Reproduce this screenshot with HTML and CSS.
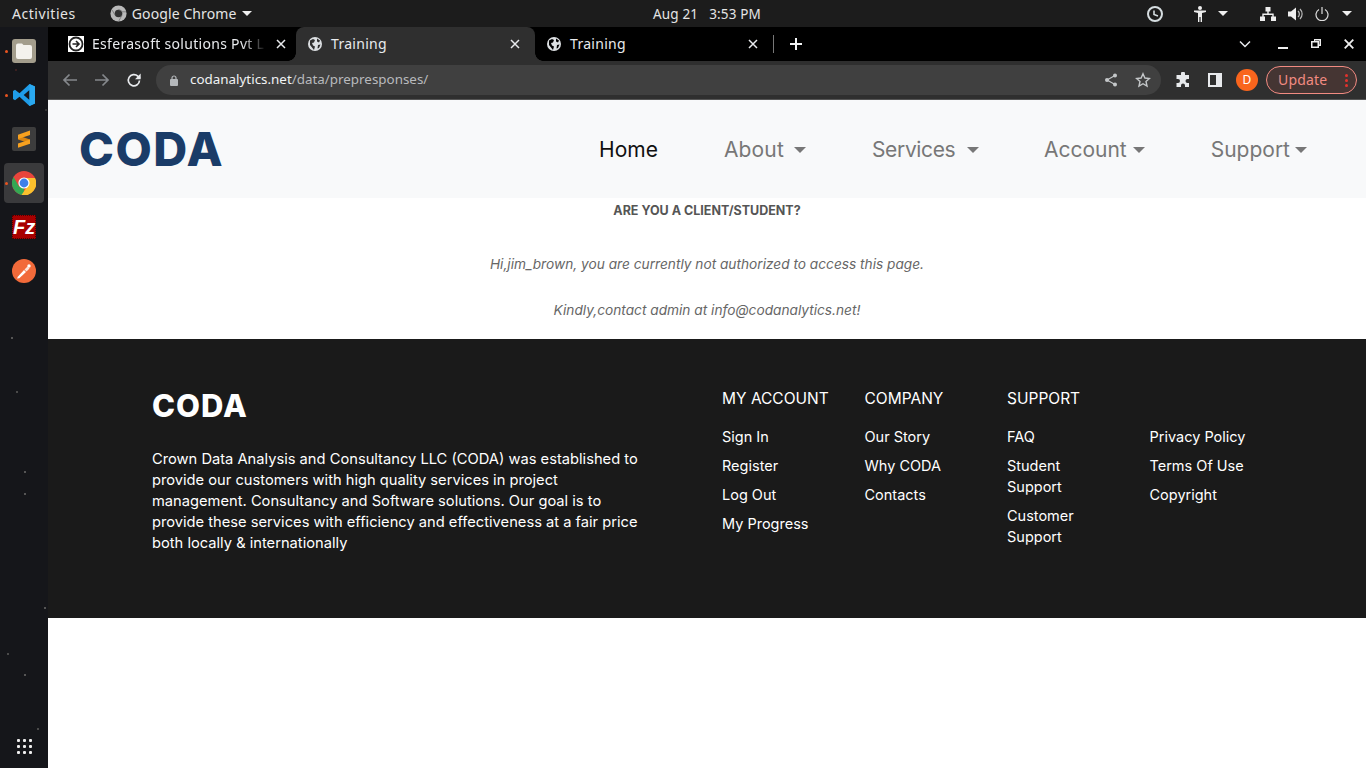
FILE: index.html
```html
<!DOCTYPE html>
<html lang="en">
<head>
    <meta charset="UTF-8">
    <title>Training</title>
    <link rel="stylesheet" href="styles.css">
</head>
<body>
    <div class="topbar">
        <div class="top-left">
            <span class="activities">Activities</span>
            <span class="app-menu">
                <svg class="app-icon" width="17" height="17" viewBox="0 0 20 20"><circle cx="10" cy="10" r="9.500" fill="#b9b9b9"/><circle cx="10" cy="10" r="4.500" fill="#333"/><path d="M10 5.500a4.500 4.500 0 0 1 4 2.500h5M6 12l-3.500-6M14 12.200L10 19.500" stroke="#777" stroke-width="1" fill="none"/></svg>
                Google Chrome
                <i class="caret"></i>
            </span>
        </div>
        <div class="clock"><span>Aug 21</span><span>3:53 PM</span></div>
        <div class="top-right">
            <svg class="tray-clock" width="18" height="18" viewBox="0 0 18 18"><circle cx="9" cy="9" r="7" fill="none" stroke="#d5dde0" stroke-width="2"/><path d="M8 5.500V9.500L12 11" fill="none" stroke="#d5dde0" stroke-width="1.600"/></svg>
            <svg class="tray-person" width="14" height="16" viewBox="0 0 14 16"><circle cx="7" cy="2" r="2" fill="#eee"/><path d="M1 4.500h12v1.600l-4 .9V16H7.600v-5H6.400v5H5V7L1 6.100z" fill="#eee"/></svg>
            <i class="caret tray-caret"></i>
            <svg class="tray-net" width="16" height="14" viewBox="0 0 16 14"><path d="M5.500 0h5v4.500h-5zM0 9.500h5V14H0zM11 9.500h5V14h-5zM7.300 4.500h1.400v2h5v3h-1.400V8H3.700v1.500H2.300v-3h5z" fill="#eee"/></svg>
            <svg class="tray-sound" width="16" height="14" viewBox="0 0 16 14"><path d="M0 4.500h3L8 .5v13l-5-4H0z" fill="#eee"/><path d="M10 4a4 4 0 0 1 0 6M12 2a7 7 0 0 1 0 10" fill="none" stroke="#bbb" stroke-width="1.200"/></svg>
            <svg class="tray-power" width="14" height="14" viewBox="0 0 14 14"><path d="M4 2.500a6 6 0 1 0 6 0" fill="none" stroke="#ddd" stroke-width="1.200"/><path d="M7 0v7" stroke="#ddd" stroke-width="1.200"/></svg>
            <i class="caret tray-caret-last"></i>
        </div>
    </div>

    <div class="desktop">
        <aside class="dock">
            <div class="dock-item">
                <i class="dot"></i>
                <svg width="24" height="24" viewBox="0 0 24 24"><rect width="24" height="24" rx="3" fill="#a39d8c"/><path d="M4 6.500a2 2 0 0 1 2-2h4l1.500 1.500H18a2 2 0 0 1 2 2V18a2 2 0 0 1-2 2H6a2 2 0 0 1-2-2z" fill="#f4f2ed"/></svg>
            </div>
            <div class="dock-item">
                <i class="dot"></i>
                <svg width="24" height="24" viewBox="0 0 24 24"><path d="M17.500 1L23 3.500v17L17.500 23 7.500 13.800 3 17.200 1 16V8l2-1.200 4.500 3.400zM17.500 7l-5.800 5 5.800 5z" fill="#1f9ce8" fill-rule="evenodd"/><path d="M17.500 1L23 3.500v17L17.500 23z" fill="#2aa9f0"/></svg>
            </div>
            <div class="dock-item">
                <svg width="24" height="24" viewBox="0 0 24 24"><rect width="24" height="24" rx="2" fill="#3d3d3d"/><path d="M6 8.500l12 4v4l-12-4z" fill="#d98511"/><path d="M18 3.500V8L6 12V7.800zM18 12.500v4.200L6 20.700v-4.200z" fill="#f7a11f"/></svg>
            </div>
            <div class="dock-item dock-active">
                <i class="dot"></i>
                <svg width="24" height="24" viewBox="0 0 24 24"><circle cx="12" cy="12" r="12" fill="#e8453c"/><path d="M12 24a12 12 0 0 1-10.400-18L7 15.500l5 1.500z" fill="#34a853"/><path d="M23 7H12l-1 5 3.500 4.500L9.500 24A12 12 0 0 0 23 7z" fill="#fbc02d"/><circle cx="12" cy="12" r="5.600" fill="#fff"/><circle cx="12" cy="12" r="4.400" fill="#3f7fe8"/></svg>
            </div>
            <div class="dock-item">
                <div class="fz-logo">Fz</div>
            </div>
            <div class="dock-item">
                <svg width="24" height="24" viewBox="0 0 24 24"><circle cx="12" cy="12" r="12" fill="#f26a3a"/><path d="M5 19.500l.8-1.800 6.200-6.700 2 2-6.700 6.200z" fill="#fff"/><path d="M12.500 10.500l3-3 2 2-3 3z" fill="#ffe3d8"/><circle cx="17" cy="7" r="1.700" fill="#fff"/></svg>
            </div>
            <div class="dock-apps">
                <i></i><i></i><i></i><i></i><i></i><i></i><i></i><i></i><i></i>
            </div>
        </aside>

        <div class="browser">
            <div class="tabstrip">
                <div class="tab">
                    <svg class="favicon" width="16" height="16" viewBox="0 0 16 16"><rect width="16" height="16" fill="#fff"/><circle cx="8" cy="8" r="6.500" fill="none" stroke="#222" stroke-width="1.800"/><path d="M4.500 8h6M8 5l3 3-3 3" fill="none" stroke="#222" stroke-width="1.600"/></svg>
                    <span class="tab-title tab-fade">Esferasoft solutions Pvt L</span>
                    <svg class="tab-x" width="10" height="10" viewBox="0 0 10 10"><path d="M1 1l8 8M9 1l-8 8" stroke="#e8eaed" stroke-width="1.500"/></svg>
                </div>
                <div class="tab tab-active">
                    <svg class="favicon" width="14" height="14" viewBox="0 0 14 14"><circle cx="7" cy="7" r="7" fill="#dcdfe2"/><path d="M2 3.500l3-1.500 2 1-1 2.500-2 .5 1 2.500 2 1-1 3.500L2 8zM9 1.500l3 2-1 2-2-1zM10 8l2.500-.5L11 11l-1.500.5z" fill="#2f2f2f"/></svg>
                    <span class="tab-title">Training</span>
                    <svg class="tab-x" width="10" height="10" viewBox="0 0 10 10"><path d="M1 1l8 8M9 1l-8 8" stroke="#e8eaed" stroke-width="1.500"/></svg>
                </div>
                <div class="tab tab-last">
                    <svg class="favicon" width="14" height="14" viewBox="0 0 14 14"><circle cx="7" cy="7" r="7" fill="#dcdfe2"/><path d="M2 3.500l3-1.500 2 1-1 2.500-2 .5 1 2.500 2 1-1 3.500L2 8zM9 1.500l3 2-1 2-2-1zM10 8l2.500-.5L11 11l-1.500.5z" fill="#000"/></svg>
                    <span class="tab-title">Training</span>
                    <svg class="tab-x" width="10" height="10" viewBox="0 0 10 10"><path d="M1 1l8 8M9 1l-8 8" stroke="#e8eaed" stroke-width="1.500"/></svg>
                </div>
                <svg class="new-tab" width="14" height="14" viewBox="0 0 14 14"><path d="M7 1v12M1 7h12" stroke="#f1f3f4" stroke-width="2"/></svg>
                <div class="window-btns">
                    <svg width="12" height="8" viewBox="0 0 12 8"><path d="M1 1.500l5 5 5-5" fill="none" stroke="#e8eaed" stroke-width="1.500"/></svg>
                    <svg class="win-min" width="10" height="10" viewBox="0 0 10 10"><path d="M0 9h10" stroke="#eee" stroke-width="2"/></svg>
                    <svg class="win-max" width="10" height="10" viewBox="0 0 10 10"><path d="M3 0h7v7H8v2H0V2h3zM4 1.500V2h4v3.500h.500v-4zM1.500 3.500v4h5v-4z" fill="#eee" fill-rule="evenodd"/></svg>
                    <svg class="win-close" width="10" height="10" viewBox="0 0 10 10"><path d="M.7.700l8.600 8.600M9.300.7L.7 9.300" stroke="#eee" stroke-width="1.800"/></svg>
                </div>
            </div>

            <div class="toolbar">
                <svg class="nav-back" width="16" height="14" viewBox="0 0 16 14"><path d="M15 7H2M7.500 1.500L2 7l5.500 5.500" fill="none" stroke="#85888c" stroke-width="1.700"/></svg>
                <svg class="nav-forward" width="16" height="14" viewBox="0 0 16 14"><path d="M1 7h13M8.500 1.500L14 7l-5.500 5.500" fill="none" stroke="#85888c" stroke-width="1.700"/></svg>
                <svg class="nav-reload" width="16" height="16" viewBox="0 0 16 16"><path d="M13.500 8.500a5.600 5.600 0 1 1-1.700-4.300L14 6" fill="none" stroke="#e8eaed" stroke-width="1.700"/><path d="M14.700 1.500v5.700H9z" fill="#e8eaed"/></svg>
                <div class="omnibox">
                    <svg class="lock" width="8" height="11" viewBox="0 0 8 11"><path d="M2 4.500V3a2 2 0 0 1 4 0v1.500" fill="none" stroke="#b5b8bb" stroke-width="1.200"/><rect y="4" width="8" height="7" rx="1" fill="#b5b8bb"/></svg>
                    <span class="url"><b>codanalytics.net</b>/data/prepresponses/</span>
                    <svg class="omni-share" width="14" height="14" viewBox="0 0 14 14"><circle cx="11" cy="2.500" r="2" fill="#c4c7c9"/><circle cx="11" cy="11.500" r="2" fill="#c4c7c9"/><circle cx="3" cy="7" r="2" fill="#c4c7c9"/><path d="M11 2.500L3 7l8 4.500" fill="none" stroke="#c4c7c9" stroke-width="1.200"/></svg>
                    <svg class="omni-star" width="16" height="16" viewBox="0 0 16 16"><path d="M8 1.800l1.900 4.200 4.500.5-3.400 3 1 4.500L8 11.700l-4 2.300 1-4.500-3.400-3 4.500-.5z" fill="none" stroke="#c4c7c9" stroke-width="1.400"/></svg>
                </div>
                <svg class="tool-ext" width="16" height="16" viewBox="0 0 16 16"><path d="M6 1.500a2 2 0 0 1 4 0V3h4v4h-1.500a2 2 0 0 0 0 4H14v4H10v-1.500a2 2 0 0 0-4 0V15H1.500v-4H3a2 2 0 0 0 0-4H1.500V3H6z" fill="#e8eaed"/></svg>
                <svg class="tool-side" width="14" height="14" viewBox="0 0 14 14"><path d="M0 0h14v14H0zM2 2v10h6V2z" fill="#e8eaed" fill-rule="evenodd"/></svg>
                <div class="avatar">D</div>
                <div class="update-btn"><span>Update</span><i class="kebab"><b></b><b></b><b></b></i></div>
            </div>

            <main class="page">
                <nav class="navbar">
                    <a class="brand">CODA</a>
                    <ul class="nav-links">
                        <li class="nav-home">Home</li>
                        <li class="nav-about">About <i class="nav-caret"></i></li>
                        <li class="nav-services">Services <i class="nav-caret"></i></li>
                        <li class="nav-account">Account<i class="nav-caret"></i></li>
                        <li class="nav-support">Support<i class="nav-caret"></i></li>
                    </ul>
                </nav>

                <section class="notice">
                    <h6>ARE YOU A CLIENT/STUDENT?</h6>
                    <p>Hi,jim_brown, you are currently not authorized to access this page.</p>
                    <p>Kindly,contact admin at info@codanalytics.net!</p>
                </section>

                <footer class="footer">
                    <div class="footer-about">
                        <h2>CODA</h2>
                        <p>Crown Data Analysis and Consultancy LLC (CODA) was established to provide our customers with high quality services in project management. Consultancy and Software solutions. Our goal is to provide these services with efficiency and effectiveness at a fair price both locally &amp; internationally</p>
                    </div>
                    <div class="footer-cols">
                        <div class="footer-col">
                            <h4>MY ACCOUNT</h4>
                            <a>Sign In</a>
                            <a>Register</a>
                            <a>Log Out</a>
                            <a>My Progress</a>
                        </div>
                        <div class="footer-col">
                            <h4>COMPANY</h4>
                            <a>Our Story</a>
                            <a>Why CODA</a>
                            <a>Contacts</a>
                        </div>
                        <div class="footer-col">
                            <h4>SUPPORT</h4>
                            <a>FAQ</a>
                            <a>Student Support</a>
                            <a>Customer Support</a>
                        </div>
                        <div class="footer-col footer-legal">
                            <a>Privacy Policy</a>
                            <a>Terms Of Use</a>
                            <a>Copyright</a>
                        </div>
                    </div>
                </footer>
            </main>
        </div>
    </div>
</body>
</html>
```

FILE: styles.css
```css
* {
    box-sizing: border-box;
}
html, body {
    margin: 0;
    height: 100%;
    overflow: hidden;
}
body {
    font-family: "Noto Sans", sans-serif;
    background: #fff;
    width: 1366px;
    height: 768px;
}

/* gnome top bar */
.topbar {
    height: 27px;
    background: #1c1c1c;
    color: #e4e4e4;
    font-size: 14px;
    display: grid;
    grid-template-columns: 641px auto 1fr;
    align-items: center;
    padding: 0 0 0 12px;
}
.top-left {
    display: flex;
    align-items: center;
    gap: 34px;
}
.activities {
    letter-spacing: .55px;
}
.app-menu {
    display: flex;
    align-items: center;
    gap: 5px;
    letter-spacing: .1px;
}
.clock {
    display: flex;
    gap: 11px;
    font-size: 13.5px;
    letter-spacing: .15px;
}
.top-right {
    display: flex;
    align-items: center;
    justify-content: flex-end;
}
.caret {
    display: inline-block;
    border-left: 5px solid transparent;
    border-right: 5px solid transparent;
    border-top: 5px solid #eee;
    margin-left: 1px;
}
.tray-clock { margin-right: 29px; }
.tray-person { margin-right: 10px; }
.tray-caret { margin-right: 32px; }
.tray-net { margin-right: 12px; }
.tray-sound { margin-right: 11px; }
.tray-power { margin-right: 12px; }
.tray-caret-last { margin-right: 14px; }

.desktop {
    display: flex;
    height: 741px;
}

/* dock, with the specks of the wallpaper */
.dock {
    width: 48px;
    background-color: #15161a;
    background-image:
        radial-gradient(circle at 12px 311px, #555 1px, transparent 1.5px),
        radial-gradient(circle at 17px 365px, #4a4a4a 1px, transparent 1.5px),
        radial-gradient(circle at 25px 445px, #555 1px, transparent 1.5px),
        radial-gradient(circle at 25px 467px, #555 1px, transparent 1.5px),
        radial-gradient(circle at 45px 581px, #555 1px, transparent 1.5px),
        radial-gradient(circle at 8px 627px, #4a4a4a 1px, transparent 1.5px),
        radial-gradient(circle at 25px 648px, #555 1px, transparent 1.5px),
        radial-gradient(circle at 38px 702px, #4a4a4a 1px, transparent 1.5px),
        radial-gradient(circle at 46px 83px, #333 1px, transparent 1.5px),
        radial-gradient(circle at 16px 43px, #3a2020 1px, transparent 1.5px);
    display: flex;
    flex-direction: column;
    align-items: center;
    padding-top: 4px;
    position: relative;
}
.dock-item {
    width: 40px;
    height: 40px;
    margin-bottom: 4px;
    display: flex;
    align-items: center;
    justify-content: center;
    position: relative;
    border-radius: 4px;
}
.dock-active {
    background: #3a3a3c;
}
.dot {
    position: absolute;
    left: 1px;
    top: 19px;
    width: 3px;
    height: 3px;
    border-radius: 50%;
    background: #e95420;
}
.fz-logo {
    width: 24px;
    height: 24px;
    background: #a80000;
    border: 1px dotted #4d0000;
    color: #fff;
    font: italic bold 20px/22px "Liberation Sans", sans-serif;
    text-align: center;
}
.dock-apps {
    position: absolute;
    left: 17px;
    bottom: 14px;
    display: grid;
    grid-template-columns: repeat(3, 3px);
    gap: 3px;
}
.dock-apps i {
    width: 3px;
    height: 3px;
    background: #eee;
    border-radius: 1px;
}

.browser {
    flex: 1;
    display: flex;
    flex-direction: column;
    min-width: 0;
}

/* chrome tabs */
.tabstrip {
    height: 34px;
    background: #000;
    display: flex;
    align-items: center;
    color: #e8eaed;
    font-size: 14px;
}
.tab {
    width: 248px;
    height: 34px;
    display: flex;
    align-items: center;
    padding: 0 10px 0 20px;
    position: relative;
}
.tab-active {
    width: 239px;
    background: #2f2f2f;
    border-radius: 8px 8px 0 0;
    padding: 0 15px 0 12px;
}
/* the scooped corners where the black tabs meet the active one */
.tab-active::before,
.tab-active::after {
    content: "";
    position: absolute;
    bottom: 0;
    width: 8px;
    height: 8px;
}
.tab-active::before {
    left: -8px;
    background: radial-gradient(circle at 0 0, #000 7.500px, #2f2f2f 8px);
}
.tab-active::after {
    right: -8px;
    background: radial-gradient(circle at 100% 0, #000 7.500px, #2f2f2f 8px);
}
.tab-last {
    width: 239px;
    padding: 0 16px 0 12px;
}
.tab-last::after {
    content: "";
    position: absolute;
    right: 0;
    top: 8px;
    height: 18px;
    border-right: 1px solid #777;
}
.favicon {
    flex-shrink: 0;
    margin-right: 9px;
}
.tab:first-child .favicon {
    margin-right: 8px;
}
.tab-title {
    flex: 1;
    white-space: nowrap;
    letter-spacing: .3px;
    padding-bottom: 2px;
}
.tab-fade {
    -webkit-mask-image: linear-gradient(to right, #000 150px, transparent 174px);
    mask-image: linear-gradient(to right, #000 150px, transparent 174px);
}
.tab-x {
    flex-shrink: 0;
    margin-left: 6px;
}
.new-tab {
    margin-left: 15px;
}
.window-btns {
    margin-left: auto;
    display: flex;
    align-items: center;
    padding-right: 12px;
}
.win-min { margin-left: 27px; }
.win-max { margin-left: 23px; }
.win-close { margin-left: 23px; }

.toolbar {
    height: 39px;
    background: #2f2f2f;
    border-bottom: 1px solid #555;
    display: flex;
    align-items: center;
    padding: 0 9px 0 14px;
}
.nav-forward { margin-left: 16px; }
.nav-reload { margin-left: 16px; }
.omnibox {
    width: 1005px;
    height: 30px;
    margin-left: 14px;
    background: #404040;
    border-radius: 15px;
    display: flex;
    align-items: center;
    padding: 0 10px 0 14px;
    font-size: 13.4px;
    color: #b8babd;
}
.url {
    margin-left: 12px;
    flex: 1;
    padding-bottom: 2px;
}
.url b {
    font-weight: 400;
    color: #f1f3f4;
}
.omni-star { margin-left: 17px; }
.tool-ext { margin-left: 14px; }
.tool-side { margin-left: 17px; }
.avatar {
    width: 22px;
    height: 22px;
    margin-left: 14px;
    border-radius: 50%;
    background: #f9651d;
    color: #fff;
    font-size: 12px;
    line-height: 22px;
    text-align: center;
}
.update-btn {
    width: 91px;
    height: 28px;
    margin-left: 8px;
    border: 1px solid #f28b82;
    border-radius: 14px;
    background: #453533;
    color: #f28b82;
    font-size: 14px;
    letter-spacing: .2px;
    display: flex;
    align-items: center;
    padding: 0 8px 2px 11px;
    justify-content: space-between;
}
.kebab {
    display: flex;
    flex-direction: column;
    gap: 2px;
    margin-top: 2px;
}
.kebab b {
    width: 3px;
    height: 3px;
    border-radius: 50%;
    background: #e5322d;
}

/* the site */
.page {
    flex: 1;
    background: #fff;
    font-family: Inter, "Noto Sans", sans-serif;
}
.navbar {
    height: 98px;
    background: #f8f9fa;
    display: flex;
    align-items: center;
    justify-content: space-between;
    padding: 0 59px 0 31px;
}
.brand {
    font-size: 47px;
    font-weight: 800;
    color: #1a3c68;
    letter-spacing: 1.500px;
    margin-top: -2px;
}
.nav-links {
    list-style: none;
    display: flex;
    margin: 0;
    padding: 0;
    font-size: 21px;
    color: #777;
}
.nav-home { color: #111; margin-right: 66px; }
.nav-about { margin-right: 66px; letter-spacing: .15px; }
.nav-about .nav-caret { margin-left: 4px; }
.nav-services { margin-right: 65px; letter-spacing: -.35px; }
.nav-account { margin-right: 66px; }
.nav-support .nav-caret { margin-left: 5px; }
.nav-caret {
    display: inline-block;
    vertical-align: 4px;
    margin-left: 6px;
    border-left: 6px solid transparent;
    border-right: 6px solid transparent;
    border-top: 6px solid #777;
}
.notice {
    height: 141px;
    text-align: center;
    color: #666;
    font-size: 13.7px;
}
.notice h6 {
    margin: 0;
    padding-top: 4px;
    font-size: 12.5px;
    line-height: 18px;
    font-weight: 700;
    color: #555;
}
.notice p {
    margin: 0;
    font-style: italic;
    padding-top: 28px;
    line-height: 18px;
}
.notice h6 + p {
    padding-top: 35px;
}
.footer {
    height: 279px;
    background: #1a1a1a;
    color: #fff;
    display: flex;
    padding: 45px 0 0 104px;
    font-size: 14.5px;
}
.footer-about {
    width: 570px;
}
.footer-about h2 {
    margin: 0 0 21px;
    font-size: 31px;
    line-height: 44px;
    font-weight: 800;
    letter-spacing: 1px;
}
.footer-about p {
    margin: 0;
    width: 490px;
    font-size: 14.7px;
    line-height: 21px;
}
.footer-cols {
    display: flex;
    padding-top: 1px;
}
.footer-col {
    width: 142.500px;
    padding-right: 36px;
}
.footer-col h4 {
    margin: 0 0 13px;
    font-size: 15.5px;
    line-height: 28px;
    font-weight: 400;
    white-space: nowrap;
}
.footer-col a {
    display: block;
    line-height: 21px;
    margin-bottom: 8px;
}
.footer-legal {
    padding-top: 41px;
    padding-right: 0;
}
```
